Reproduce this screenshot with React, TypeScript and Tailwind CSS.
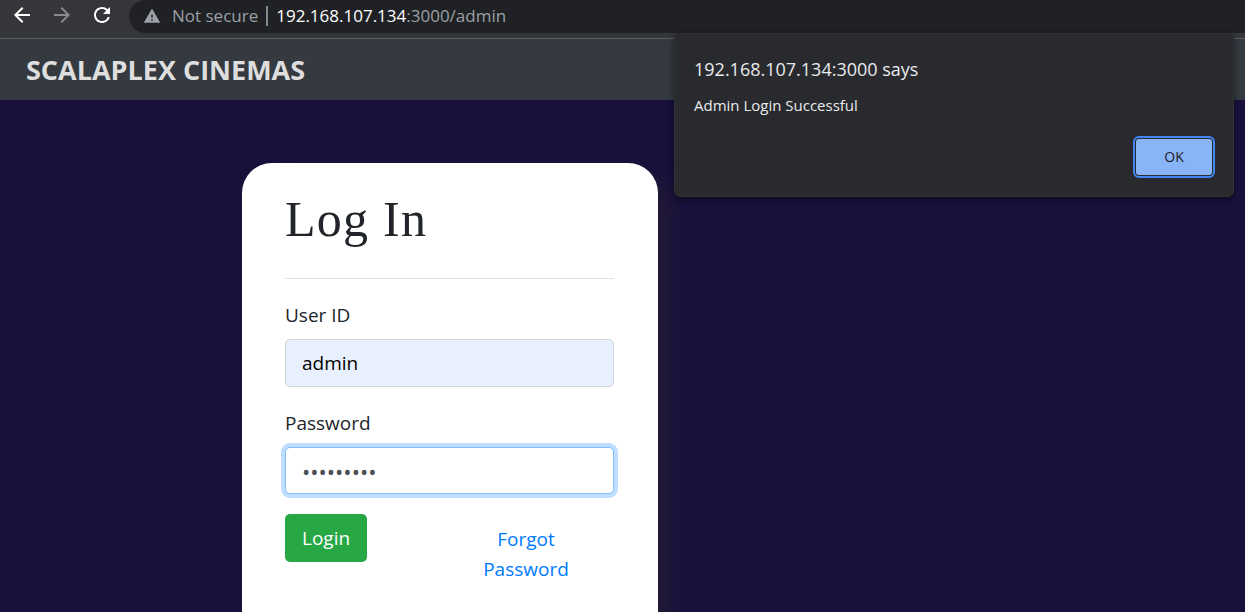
import { useState } from "react";
import { MdArrowBack, MdArrowForward, MdRefresh, MdWarning } from "react-icons/md";

function BrowserBar() {
  return (
    <div className="flex h-[39px] shrink-0 items-start border-b border-[#5d5e61] bg-[#35363a]">
      <div className="flex w-[129px] items-center gap-4 pl-[10px] pt-[3px]">
        <button type="button" aria-label="Back" className="text-white">
          <MdArrowBack size={24} />
        </button>
        <button type="button" aria-label="Forward" className="text-[#88898c]">
          <MdArrowForward size={24} />
        </button>
        <button type="button" aria-label="Reload" className="text-white">
          <MdRefresh size={24} />
        </button>
      </div>
      <div className="flex h-[33px] flex-1 items-center rounded-l-full bg-[#202124] pb-[2px] pl-[14px] text-[17px] text-[#9aa0a6]">
        <MdWarning size={18} />
        <span className="ml-[11px]">Not secure</span>
        <span className="mx-2 h-5 w-[2px] bg-[#85888c]" />
        <span>
          <span className="text-white">192.168.107.134</span>:3000/admin
        </span>
      </div>
    </div>
  );
}

function AlertDialog({ onClose }: { onClose: () => void }) {
  return (
    <div
      role="alertdialog"
      aria-label="192.168.107.134:3000 says"
      className="absolute right-[11px] top-[33px] flex h-[164px] w-[560px] flex-col rounded-md border border-[#303134] bg-[#292a2d] pl-[19px] pr-[21px] pt-[21px] text-[#e8eaed] shadow-[0_2px_6px_rgba(0,0,0,0.5)]"
    >
      <h2 className="text-[18px] leading-7">192.168.107.134:3000 says</h2>
      <p className="mt-[10px] text-[15px] leading-6">Admin Login Successful</p>
      <button
        type="button"
        onClick={onClose}
        className="mt-[22px] h-9 w-[76px] self-end rounded-[3px] bg-[#8ab4f8] text-sm text-[#202124] outline-2 outline-offset-1 outline-[#4285f4]"
      >
        OK
      </button>
    </div>
  );
}

export default function App() {
  const [open, setOpen] = useState(true);
  const [user, setUser] = useState("admin");
  const [password, setPassword] = useState("admin1234");
  return (
    <div className="relative flex h-screen flex-col overflow-hidden bg-[#19113c] font-['Open_Sans','Noto_Sans',sans-serif]">
      <BrowserBar />
      <header className="flex h-[61px] shrink-0 items-center bg-[#343a40] px-[26px] pt-[2px]">
        <h1 className="text-[27px] font-bold text-[#dedede]">SCALAPLEX CINEMAS</h1>
      </header>
      <main className="flex-1 pt-[63px]">
        <form
          onSubmit={(e) => e.preventDefault()}
          className="ml-[242px] min-h-[520px] w-[416px] max-w-full rounded-[30px] bg-white pl-[43px] pr-11 pt-7 text-[19px] leading-[30px] text-[#212529] shadow-[12px_12px_22px_#221a35]"
        >
          <h2 className="font-['Liberation_Serif',serif] text-[50px] leading-[56px] tracking-wide">Log In</h2>
          <hr className="mt-[31px] border-[#e2e2e2]" />
          <label htmlFor="user" className="mt-[21px] block">
            User ID
          </label>
          <input
            id="user"
            value={user}
            onChange={(e) => setUser(e.target.value)}
            className="mt-[9px] block h-12 w-full rounded-[5px] border border-[#ced4da] bg-[#e8f0fe] px-4 text-black"
          />
          <label htmlFor="password" className="mt-[21px] block">
            Password
          </label>
          <input
            id="password"
            type="password"
            value={password}
            onChange={(e) => setPassword(e.target.value)}
            className="mt-[9px] block h-[47px] w-full rounded-[5px] border border-[#80bdff] bg-white px-4 text-[22px] text-[#495057] shadow-[0_0_0_4px_#bfdeff] outline-none"
          />
          <div className="mt-5 flex items-start justify-between">
            <button type="submit" className="h-12 rounded-[5px] bg-[#28a745] px-[17px] text-white">
              Login
            </button>
            <a href="#forgot" className="mr-[43px] mt-[10px] w-[90px] text-center text-[#007bff]">
              Forgot Password
            </a>
          </div>
        </form>
      </main>
      {open && <AlertDialog onClose={() => setOpen(false)} />}
    </div>
  );
}
